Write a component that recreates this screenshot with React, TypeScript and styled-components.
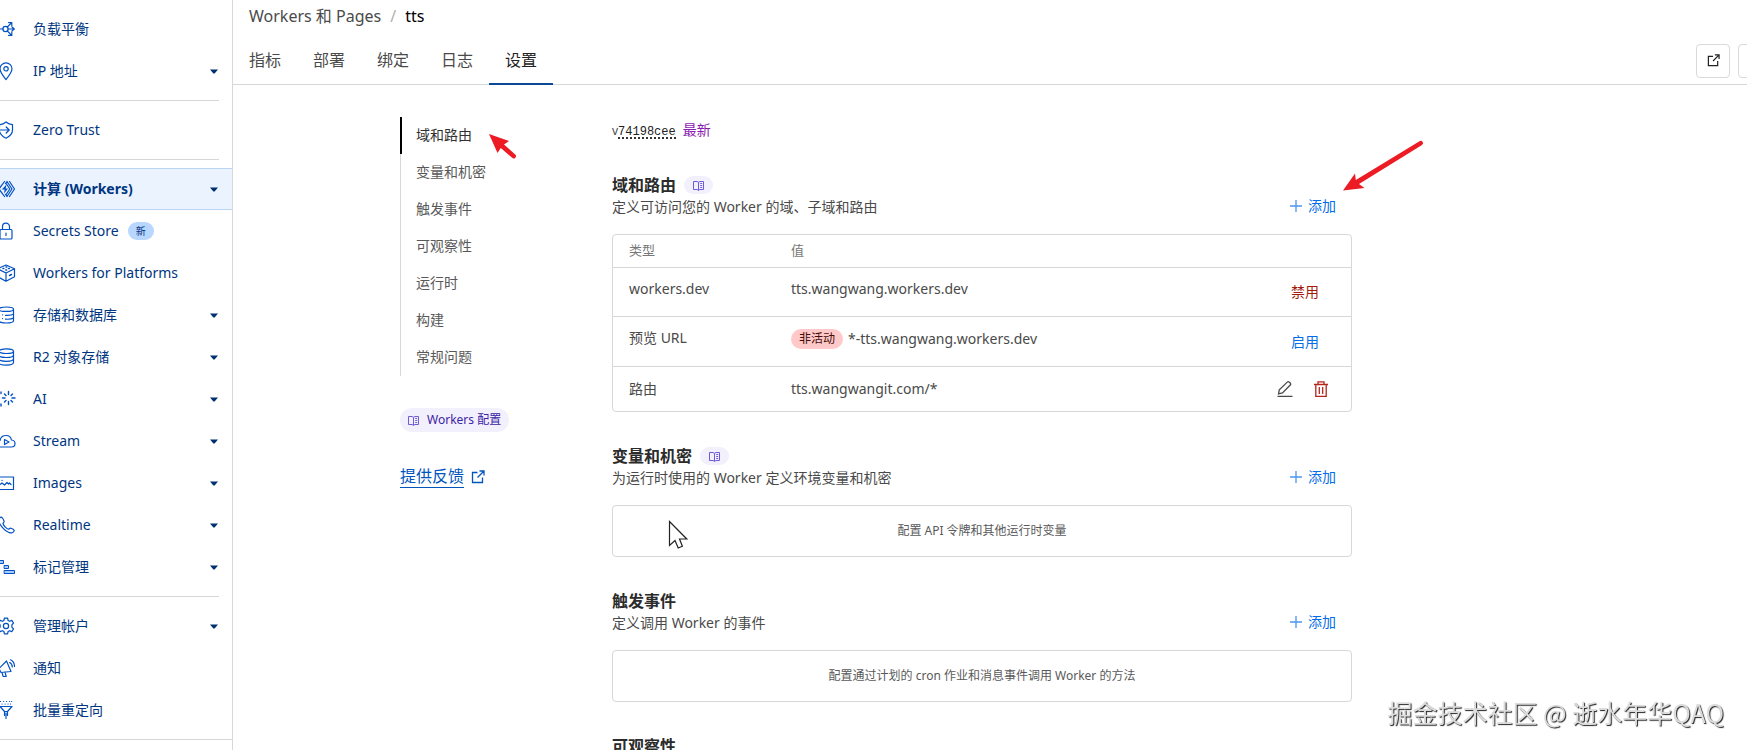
import React from "react";
import styled, { createGlobalStyle, css } from "styled-components";

const GlobalStyle = createGlobalStyle`
  * { box-sizing: border-box; }
  body {
    margin: 0;
    background: #fff;
    color: #4a4a4a;
    font-family: "Noto Sans", "Noto Sans CJK SC", sans-serif;
    font-size: 14px;
    line-height: 20px;
  }
  button { font: inherit; background: none; border: 0; padding: 0; cursor: pointer; }
  a { color: inherit; text-decoration: none; }
  ul, ol { list-style: none; margin: 0; padding: 0; }
  h2, p { margin: 0; }
  svg { display: block; flex: none; }
`;

const Shell = styled.div`
  display: flex;
  height: 100vh;
  overflow: hidden;
`;

/* ---------- sidebar ---------- */

const Sidebar = styled.nav`
  flex: none;
  width: 236px;
  margin-left: -3px;
  padding-top: 8px;
  border-right: 1px solid #d5d7d8;
  overflow: hidden;
`;

const NavLink = styled.a<{ $active?: boolean }>`
  display: flex;
  align-items: center;
  height: 42px;
  padding-right: 14px;
  color: #003681;
  border: solid transparent;
  border-width: 1px 0;
  ${(p) =>
    p.$active &&
    css`
      font-weight: 700;
      background: #ebf3ff;
      border-color: #b9d6f5;
    `}
`;

const NavIcon = styled.svg`
  width: 18px;
  height: 18px;
  margin-right: 18px;
  fill: none;
  stroke: #0051c3;
  stroke-width: 1.2;
  stroke-linecap: round;
  stroke-linejoin: round;
  overflow: visible;
`;

const NavCaret = styled.svg`
  margin-left: auto;
  fill: #003070;
`;

const NewBadge = styled.span`
  margin-left: 9px;
  padding: 0 8px;
  border-radius: 9px;
  background: #b9d6ff;
  font-size: 10px;
  line-height: 18px;
`;

const Divider = styled.hr<{ $full?: boolean }>`
  height: 1px;
  margin: 8px ${(p) => (p.$full ? 0 : 13)}px 8px 0;
  border: 0;
  background: #d5d7d8;
`;

const icons: Record<string, React.ReactNode> = {
  balance: (
    <>
      <circle cx="8.5" cy="9" r="2.6" />
      <path d="M3 9h3M11 9h6M15 7l2.3 2L15 11M10.3 7l4.2-4.2M11.6 2.6h3.2v3.2M10.3 11l4.2 4.2M11.6 15.4h3.2v-3.2" />
    </>
  ),
  pin: (
    <>
      <path d="M9 17.6C5.400 13.200 3 9.900 3 6.800a6 6 0 0 1 12 0c0 3.100-2.400 6.400-6 10.800z" />
      <circle cx="9" cy="6.800" r="2.200" />
    </>
  ),
  shield: (
    <>
      <path d="M2.500 6V3.600C5 3.500 7.200 2.500 9 1c1.800 1.500 4 2.500 6.500 2.600V9c0 3.600-2.500 6.300-6.500 8.200-3.200-1.500-5.400-3.400-6.200-6" />
      <path d="M1.500 9h10.500M9.200 6l3 3-3 3" />
    </>
  ),
  workers: (
    <>
      <path d="M7.500 1.500L2 9l5.500 7.500M10 1.500l-1.500 2.200M10 16.500l-1.500-2.200M9.500 4l3.300 5-3.300 5M10 1.500L15 9l-5 7.500M12.500 1.500l5 7.500-5 7.500" />
      <path d="M9.500 4.500L4.800 9.600h2.900L7 13.500l4-5.100H8.600z" fill="#0051c3" stroke="none" />
    </>
  ),
  lock: (
    <>
      <rect x="3" y="7.500" width="12" height="9.500" rx="1" />
      <path d="M5.500 7.500V4.600a3.500 3.500 0 0 1 7 0v2.900M9 11v2.600" />
    </>
  ),
  platforms: (
    <>
      <path d="M9 1l8.500 3.700v8L9 17.200.5 12.700v-8zM.5 4.700L9 9l8.500-4.300M9 9v8" />
      <path d="M6 4.500h.8M9 3h.8M11.500 4.500h.8M8.800 6h.8M12.500 11.500l2-1" strokeWidth="1.500" />
    </>
  ),
  storage: (
    <>
      <path d="M2 3.200C2 1.900 5 1 9.500 1s7 .9 7 2.200v11.600c0 1.300-2.500 2.200-7 2.200S2 16.100 2 14.800zM2 3.200c0 1.300 3 2.200 7.500 2.200s7-.9 7-2.200" />
      <path d="M8.500 9.300c4 .2 7-.4 8-1.200M8.500 13.200c4 .2 7-.4 8-1.200M5.500 8.800h.1M5.500 12.600h.1" />
    </>
  ),
  r2: (
    <path d="M2 3.200C2 1.900 5 .9 9.500.9s7 1 7 2.300-2.500 2.300-7 2.300-7.500-1-7.500-2.300zM2 3.200v11.400c0 1.500 3 2.500 7.500 2.500s7-1 7-2.500V3.200M2 7c0 1.500 3 2.500 7.500 2.500s7-1 7-2.500M2 10.800c0 1.500 3 2.500 7.500 2.500s7-1 7-2.500" />
  ),
  ai: (
    <path
      strokeWidth="1.400"
      d="M11.500 1.500v3M11.500 11.500v3M5.500 8h2.500M15 8h3M7.500 4l1.500 1.500M15.500 4L14 5.500M7.500 12L9 10.500M15.500 12L14 10.500M4 2v1.500M4 14v2M2 8h.5"
    />
  ),
  stream: (
    <>
      <path d="M3 15c-2 0-3-1.500-3-3.200 0-1.800 1.200-3 3-3.200C3.500 5.500 5.800 3.500 9 3.500c3 0 5 1.800 5.400 4.500 2.200.2 3.600 1.600 3.600 3.500S16.800 15 14.500 15z" />
      <path d="M7.500 7.600v5l4.500-2.500z" />
    </>
  ),
  images: (
    <>
      <path d="M1 3h15.500v12.500H1z" />
      <path d="M3 10.500l2-1.500 2.500 2 2.500-2.500 1.500 1.500 1-1 1.500 1.500M5 6.300h.2" />
    </>
  ),
  phone: (
    <path d="M3.500 1.200L1.500 3c-.7 4 6 12.500 11.500 13.800 1.800.4 3.800-.6 4.200-2.200.2-1-1-1.600-3.200-2.400-1.200-.4-1.700.9-2.600 1C9.300 12.500 6.500 9.500 6 7.500c.2-.8 1.500-1.200 1.100-2.200C6.500 3.500 5 .4 3.500 1.200z" />
  ),
  tags: (
    <path
      strokeWidth="1"
      strokeLinejoin="miter"
      fill="#a8cbff"
      d="M0 2.500h6.500v3H0zM7.500 7.500h4v3h-4zM7.500 12.500h10v3h-10z"
    />
  ),
  gear: (
    <>
      <path d="M7.400 1.200h3.200l.5 2.300 1.500.8 2.200-.9 1.700 2.600L14.900 7.800v2.400l1.600 1.800-1.700 2.600-2.200-.9-1.500.8-.5 2.300H7.400l-.5-2.300-1.500-.8-2.200.9L1.500 12l1.600-1.800V7.800L1.500 6l1.700-2.600 2.200.9 1.500-.8z" />
      <circle cx="9" cy="9" r="2.600" />
    </>
  ),
  megaphone: (
    <path d="M2 9.500L9.500 2l4.500 10.500-10 1zM5 13.500l1.200 4h3L8 13M12.500 3.500c1.800.8 2.800 2.500 2.800 4.500M13.500.8c2.500 1.200 4 3.700 4 6.700M2 9.500L4 13.500" />
  ),
  funnel: (
    <path d="M3 5.500h12l-4.500 5v4M3 5.500l4.500 5v4M7.500 10.500h3M9 12v5.500M3.500 .5h.1M6.500 .5h.1M9.500 .5h.1M12.500 .5h.1M14.500 .5h.1M5 3h.1M8 3h.1M11 3h.1M13.500 3h.1" />
  ),
};

interface NavEntry {
  icon: string;
  label: string;
  caret?: boolean;
  active?: boolean;
  isNew?: boolean;
}

const navGroups: NavEntry[][] = [
  [
    { icon: "balance", label: "负载平衡" },
    { icon: "pin", label: "IP 地址", caret: true },
  ],
  [{ icon: "shield", label: "Zero Trust" }],
  [
    { icon: "workers", label: "计算 (Workers)", caret: true, active: true },
    { icon: "lock", label: "Secrets Store", isNew: true },
    { icon: "platforms", label: "Workers for Platforms" },
    { icon: "storage", label: "存储和数据库", caret: true },
    { icon: "r2", label: "R2 对象存储", caret: true },
    { icon: "ai", label: "AI", caret: true },
    { icon: "stream", label: "Stream", caret: true },
    { icon: "images", label: "Images", caret: true },
    { icon: "phone", label: "Realtime", caret: true },
    { icon: "tags", label: "标记管理", caret: true },
  ],
  [
    { icon: "gear", label: "管理帐户", caret: true },
    { icon: "megaphone", label: "通知" },
    { icon: "funnel", label: "批量重定向" },
  ],
];

/* ---------- header ---------- */

const Main = styled.main`
  flex: 1;
  min-width: 0;
  overflow: hidden;
`;

const Breadcrumb = styled.ol`
  display: flex;
  gap: 9px;
  padding: 4px 16px 9px;
  font-size: 16px;
  line-height: 24px;
`;

const Slash = styled.li`
  color: #b0b0b0;
`;

const Current = styled.li`
  color: #000;
`;

const TabBar = styled.div`
  display: flex;
  align-items: center;
  height: 48px;
  margin-right: -25px;
  border-bottom: 1px solid #d5d7d8;
`;

const Tab = styled.a<{ $active?: boolean }>`
  height: 48px;
  padding: 0 16px;
  font-size: 16px;
  line-height: 46px;
  color: ${(p) => (p.$active ? "#222" : "#4a4a4a")};
  box-shadow: ${(p) => (p.$active ? "inset 0 -2px #0a4a94" : "none")};
`;

const HeaderActions = styled.div`
  display: flex;
  gap: 8px;
  margin-left: auto;
`;

const IconBox = styled.button`
  display: grid;
  place-items: center;
  width: 34px;
  height: 34px;
  border: 1px solid #d9d9d9;
  border-radius: 4px;
  color: #222;
`;

/* ---------- settings ---------- */

const Settings = styled.div`
  display: grid;
  grid-template-columns: 160px minmax(0, 740px);
  gap: 52px;
  padding: 32px clamp(16px, 12%, 167px);
`;

const TocList = styled.ul`
  border-left: 1px solid #d5d7d8;
`;

const TocItem = styled.li`
  position: relative;
  margin-left: -1px;
`;

const TocLink = styled.a<{ $active?: boolean }>`
  display: block;
  padding: 0 0 2px ${(p) => (p.$active ? 14 : 16)}px;
  line-height: 35px;
  color: ${(p) => (p.$active ? "#313131" : "#595959")};
  border-left: ${(p) => (p.$active ? "2px solid #000" : "0")};
`;

const DocsPill = styled.a<{ $small?: boolean }>`
  display: inline-flex;
  align-items: center;
  gap: 8px;
  height: ${(p) => (p.$small ? 18 : 24)}px;
  padding: 0 ${(p) => (p.$small ? 9 : 8)}px;
  border-radius: 12px;
  background: #f2f0fd;
  color: #3c22a6;
  font-size: 12px;
`;

const PillRow = styled.div`
  display: flex;
  margin-top: 32px;
`;

const Feedback = styled.a`
  display: inline-flex;
  align-items: center;
  gap: 7px;
  margin-top: 33px;
  color: #0055bc;
  font-size: 16px;
  line-height: 22px;
`;

const Underlined = styled.span`
  border-bottom: 1px solid currentColor;
`;

const Version = styled.div`
  display: flex;
  margin-top: 4px;
  font-size: 12px;
  line-height: 20px;
`;

const Hash = styled.code`
  height: 18px;
  font: 12px/22px "Liberation Mono", monospace;
  color: #222;
  border-bottom: 2px dotted #333;
`;

const Latest = styled.span`
  margin-left: 7px;
  font-size: 14px;
  line-height: 18px;
  color: #8a1ab0;
`;

const Section = styled.section`
  margin-top: 32px;
`;

const SectionHead = styled.div`
  position: relative;
  display: flex;
  justify-content: space-between;
  align-items: flex-end;
  margin-bottom: 17px;
`;

const SectionTitle = styled.h2`
  display: flex;
  align-items: center;
  gap: 8px;
  font-size: 16px;
  line-height: 24px;
  font-weight: 700;
  color: #2b2b2b;
`;

const AddButton = styled.button`
  display: flex;
  align-items: center;
  gap: 6px;
  padding-right: 16px;
  line-height: 22px;
  color: #056de8;
`;

const Panel = styled.div`
  position: relative;
  display: grid;
  place-items: center;
  height: 52px;
  border: 1px solid #d5d7d8;
  border-radius: 4px;
  font-size: 12px;
  color: #595959;
`;

const RouteTable = styled.table`
  width: 100%;
  table-layout: fixed;
  border-collapse: separate;
  border-spacing: 0;
  border: 1px solid #d5d7d8;
  border-radius: 4px;
`;

const HeadCell = styled.th<{ $width?: number }>`
  width: ${(p) => (p.$width ? `${p.$width}px` : "auto")};
  height: 33px;
  padding: 0 16px 2px;
  border-bottom: 1px solid #d5d7d8;
  font-size: 13px;
  font-weight: 400;
  text-align: left;
  color: #777;
`;

const Cell = styled.td<{ $last?: boolean }>`
  height: ${(p) => (p.$last ? 44 : 49)}px;
  padding: ${(p) => (p.$last ? "0 16px" : "11px 16px 16px")};
  border-bottom: ${(p) => (p.$last ? "0" : "1px solid #d5d7d8")};
  vertical-align: ${(p) => (p.$last ? "middle" : "baseline")};
  color: #4a4a4a;
`;

const CellRow = styled.div`
  display: flex;
  align-items: center;
  gap: 5px;
  height: 22px;
`;

const ActionCell = styled(Cell)`
  padding: 0 16px;
  vertical-align: middle;
`;

const Actions = styled.div<{ $inset: number }>`
  display: flex;
  justify-content: flex-end;
  gap: 20px;
  padding-right: ${(p) => p.$inset}px;
`;

const TextButton = styled.button<{ $danger?: boolean }>`
  color: ${(p) => (p.$danger ? "#a5180c" : "#056de8")};
`;

const StatusPill = styled.span`
  padding: 0 8px;
  border-radius: 10px;
  background: #ffc9c9;
  color: #430c08;
  font-size: 12px;
  line-height: 20px;
`;

const TocArrow = styled.svg`
  position: absolute;
  left: 88px;
  top: 15px;
`;

const AddArrow = styled.svg`
  position: absolute;
  right: -72px;
  top: -34px;
`;

const Pointer = styled.svg`
  position: absolute;
  left: 55px;
  top: 14px;
`;

const Watermark = styled.div`
  position: fixed;
  right: 23px;
  bottom: 20px;
  font: 25px/36px "Noto Sans", "Noto Sans CJK SC", sans-serif;
  font-family: "Noto Sans CJK SC", sans-serif;
  color: #dcdcdc;
  text-shadow: 1px 1px 1px #222;
`;

const BookIcon = () => (
  <svg width="11" height="11" viewBox="0 0 11 11" fill="none" stroke="#6f5ad8">
    <path d="M.5 1.500h3.500l1.500.8L7 1.500h3.500v8H7l-1.500.8-1.500-.8H.5zM5.500 2.300v8M7.200 3.500h2M7.200 5.500h2M7.200 7.500h2" />
  </svg>
);

const ExternalIcon = ({ size = 14 }: { size?: number }) => (
  <svg width={size} height={size} viewBox="0 0 14 14" fill="none" stroke="currentColor" strokeWidth="1.300">
    <path d="M6.500 2.500H1.500v10h10v-5M8.500 1H13v4.500M13 1L6.500 7.500" />
  </svg>
);

const Add = () => (
  <AddButton type="button">
    <svg width="12" height="12" viewBox="0 0 12 12" stroke="#4a95ee" strokeWidth="1.300">
      <path d="M6 0v12M0 6h12" />
    </svg>
    添加
  </AddButton>
);

interface HeadProps {
  title: string;
  text?: string;
  docs?: boolean;
  children?: React.ReactNode;
}

const Head = ({ title, text, docs, children }: HeadProps) => (
  <SectionHead>
    <div>
      <SectionTitle>
        {title}
        {docs && (
          <DocsPill $small href="#docs" aria-label={`${title} 文档`}>
            <BookIcon />
          </DocsPill>
        )}
      </SectionTitle>
      {text && <p>{text}</p>}
    </div>
    {text && <Add />}
    {children}
  </SectionHead>
);

const tabs = ["指标", "部署", "绑定", "日志", "设置"];
const toc = ["域和路由", "变量和机密", "触发事件", "可观察性", "运行时", "构建", "常规问题"];

export default function App() {
  return (
    <>
      <GlobalStyle />
      <Shell>
        <Sidebar>
          {navGroups.map((group, i) => (
            <React.Fragment key={i}>
              {group.map((item) => (
                <NavLink key={item.label} href="#nav" $active={item.active}>
                  <NavIcon viewBox="0 0 18 18">{icons[item.icon]}</NavIcon>
                  {item.label}
                  {item.isNew && <NewBadge>新</NewBadge>}
                  {item.caret && (
                    <NavCaret width="8" height="5" viewBox="0 0 8 5">
                      <path d="M0 .5h8L4.600 4.600h-1.200z" />
                    </NavCaret>
                  )}
                </NavLink>
              ))}
              <Divider $full={i === navGroups.length - 1} />
            </React.Fragment>
          ))}
        </Sidebar>
        <Main>
          <Breadcrumb>
            <li>
              <a href="#workers">Workers 和 Pages</a>
            </li>
            <Slash>/</Slash>
            <Current>tts</Current>
          </Breadcrumb>
          <TabBar>
            {tabs.map((t) => (
              <Tab key={t} href="#tab" $active={t === "设置"}>
                {t}
              </Tab>
            ))}
            <HeaderActions>
              <IconBox type="button" aria-label="打开">
                <ExternalIcon size={13} />
              </IconBox>
              <IconBox type="button" aria-label="更多" />
            </HeaderActions>
          </TabBar>
          <Settings>
            <aside>
              <TocList>
                {toc.map((t, i) => (
                  <TocItem key={t}>
                    <TocLink href="#section" $active={i === 0}>
                      {t}
                    </TocLink>
                    {i === 0 && (
                      <TocArrow width="30" height="30" viewBox="0 0 30 30" fill="#ed1c24">
                        <path d="M1 2l20 7-5 3.500L27.200 22.500a2.200 2.200 0 0 1-3 3.300L12.800 16 9.500 21z" />
                      </TocArrow>
                    )}
                  </TocItem>
                ))}
              </TocList>
              <PillRow>
                <DocsPill href="#docs">
                  <BookIcon />
                  Workers 配置
                </DocsPill>
              </PillRow>
              <Feedback href="#feedback">
                <Underlined>提供反馈</Underlined>
                <ExternalIcon />
              </Feedback>
            </aside>
            <div>
              <Version>
                v<Hash>74198cee</Hash>
                <Latest>最新</Latest>
              </Version>
              <Section>
                <Head title="域和路由" text="定义可访问您的 Worker 的域、子域和路由" docs>
                  <AddArrow width="82" height="54" viewBox="0 0 82 54" fill="#ed1c24">
                    <path d="M1 51.500L13 34.500l.8 6.500L77.500 2.200a2.200 2.200 0 0 1 2.500 3.700L17 45l5.500 4z" />
                  </AddArrow>
                </Head>
                <RouteTable>
                  <thead>
                    <tr>
                      <HeadCell $width={162}>类型</HeadCell>
                      <HeadCell>值</HeadCell>
                      <HeadCell $width={120} aria-label="操作" />
                    </tr>
                  </thead>
                  <tbody>
                    <tr>
                      <Cell>workers.dev</Cell>
                      <Cell>tts.wangwang.workers.dev</Cell>
                      <ActionCell>
                        <Actions $inset={16}>
                          <TextButton type="button" $danger>
                            禁用
                          </TextButton>
                        </Actions>
                      </ActionCell>
                    </tr>
                    <tr>
                      <Cell>预览 URL</Cell>
                      <Cell>
                        <CellRow>
                          <StatusPill>非活动</StatusPill>
                          <span>*-tts.wangwang.workers.dev</span>
                        </CellRow>
                      </Cell>
                      <ActionCell>
                        <Actions $inset={16}>
                          <TextButton type="button">启用</TextButton>
                        </Actions>
                      </ActionCell>
                    </tr>
                    <tr>
                      <Cell $last>路由</Cell>
                      <Cell $last>tts.wangwangit.com/*</Cell>
                      <ActionCell $last>
                        <Actions $inset={6}>
                          <button type="button" aria-label="编辑">
                            <svg width="16" height="16" viewBox="0 0 16 16" fill="none" stroke="#4a4a4a" strokeWidth="1.300">
                              <path d="M1.500 12.800l.8-4L10.500.9c1-.8 3.900 1.700 3 2.900L5.500 12zM.5 15.500h15" />
                            </svg>
                          </button>
                          <button type="button" aria-label="删除">
                            <svg width="16" height="16" viewBox="0 0 16 16" fill="none" stroke="#b3261e" strokeWidth="1.300">
                              <path d="M1 3.500h14M5 3.500V.8h6v2.700M2.800 3.500v11.800h10.400V3.500M6.300 6v7M9.700 6v7" />
                            </svg>
                          </button>
                        </Actions>
                      </ActionCell>
                    </tr>
                  </tbody>
                </RouteTable>
              </Section>
              <Section>
                <Head title="变量和机密" text="为运行时使用的 Worker 定义环境变量和机密" docs />
                <Panel>
                  配置 API 令牌和其他运行时变量
                  <Pointer width="20" height="30" viewBox="0 0 20 30" fill="#fff" stroke="#222" strokeWidth="1.200">
                    <path d="M1.500 1.500v24l5.500-5 3.200 7.500 4.200-1.800L11.500 19h7.300z" />
                  </Pointer>
                </Panel>
              </Section>
              <Section>
                <Head title="触发事件" text="定义调用 Worker 的事件" />
                <Panel>配置通过计划的 cron 作业和消息事件调用 Worker 的方法</Panel>
              </Section>
              <Section>
                <Head title="可观察性" />
              </Section>
            </div>
          </Settings>
        </Main>
      </Shell>
      <Watermark>掘金技术社区 @ 逝水年华QAQ</Watermark>
    </>
  );
}
